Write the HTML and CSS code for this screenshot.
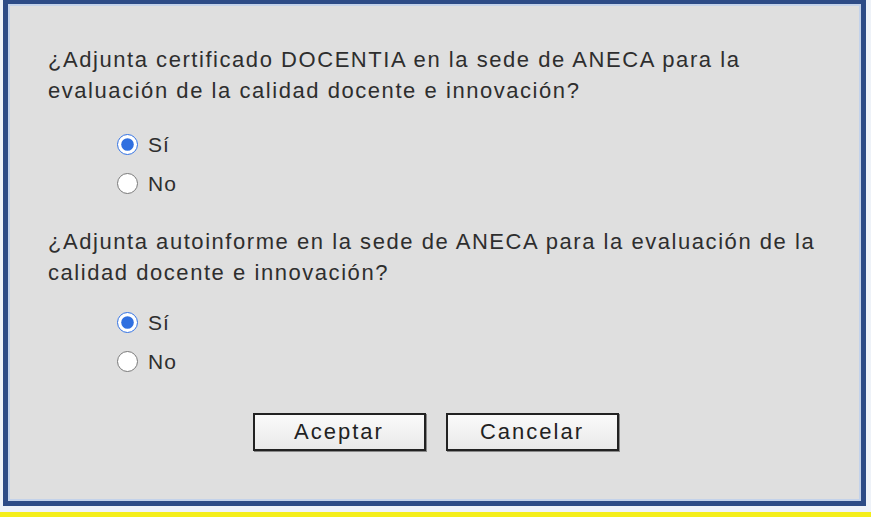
FILE: index.html
```html
<!DOCTYPE html>
<html lang="es">
<head>
  <meta charset="UTF-8">
  <title>Evaluación docente</title>
  <link rel="stylesheet" href="styles.css">
</head>
<body>
  <div class="dialog">
    <form class="dialog-body" onsubmit="return false">
      <p class="question">¿Adjunta certificado DOCENTIA en la sede de ANECA para la evaluación de la calidad docente e innovación?</p>
      <div class="options">
        <label class="option"><input type="radio" name="docentia" checked><span>Sí</span></label>
        <label class="option"><input type="radio" name="docentia"><span>No</span></label>
      </div>
      <p class="question">¿Adjunta autoinforme en la sede de ANECA para la evaluación de la calidad docente e innovación?</p>
      <div class="options options-last">
        <label class="option"><input type="radio" name="autoinforme" checked><span>Sí</span></label>
        <label class="option"><input type="radio" name="autoinforme"><span>No</span></label>
      </div>
      <div class="actions">
        <button type="submit">Aceptar</button>
        <button type="button">Cancelar</button>
      </div>
    </form>
  </div>
  <div class="bottom-bar"></div>
</body>
</html>
```

FILE: styles.css
```css
html, body {
  margin: 0;
  padding: 0;
}
body {
  background: #eef2f8;
  font-family: "Liberation Sans", Arial, sans-serif;
  color: #2e2e2e;
  height: 517px;
  overflow: hidden;
}
.dialog {
  margin: 0 5px 0 3px;
  height: 506px;
  box-sizing: border-box;
  border: 5px solid #2d4b86;
  border-top-width: 4px;
  background: #dfdfdf;
  box-shadow: inset 0 0 0 2px #c3d2ea;
}
.dialog-body {
  padding: 40px 20px 0 40px;
  display: flex;
  flex-direction: column;
}
.question {
  margin: 0;
  font-size: 22px;
  letter-spacing: 1.55px;
  line-height: 31px;
}
.options {
  display: flex;
  flex-direction: column;
  margin: 19px 0 23px 69px;
}
.options-last {
  margin: 15px 0 27px 69px;
}
.option {
  display: flex;
  align-items: center;
  height: 39px;
  font-size: 21px;
  letter-spacing: 1px;
}
.option input {
  width: 21px;
  height: 21px;
  margin: 0 10px 0 0;
  accent-color: #2f6fe0;
}
.actions {
  display: flex;
  justify-content: center;
  gap: 20px;
  margin: 5px 18px 0 0;
}
.actions button {
  width: 173px;
  height: 38px;
  font-family: "Liberation Sans", Arial, sans-serif;
  font-size: 22px;
  letter-spacing: 2px;
  color: #222;
  background: linear-gradient(#fafafa, #e9e9e9);
  border: 2px solid #222;
  border-radius: 0;
  box-shadow: 1px 1px 0 #888;
  cursor: pointer;
}
.bottom-bar {
  margin-top: 6px;
  height: 5px;
  background: #f4ee1a;
}
```
